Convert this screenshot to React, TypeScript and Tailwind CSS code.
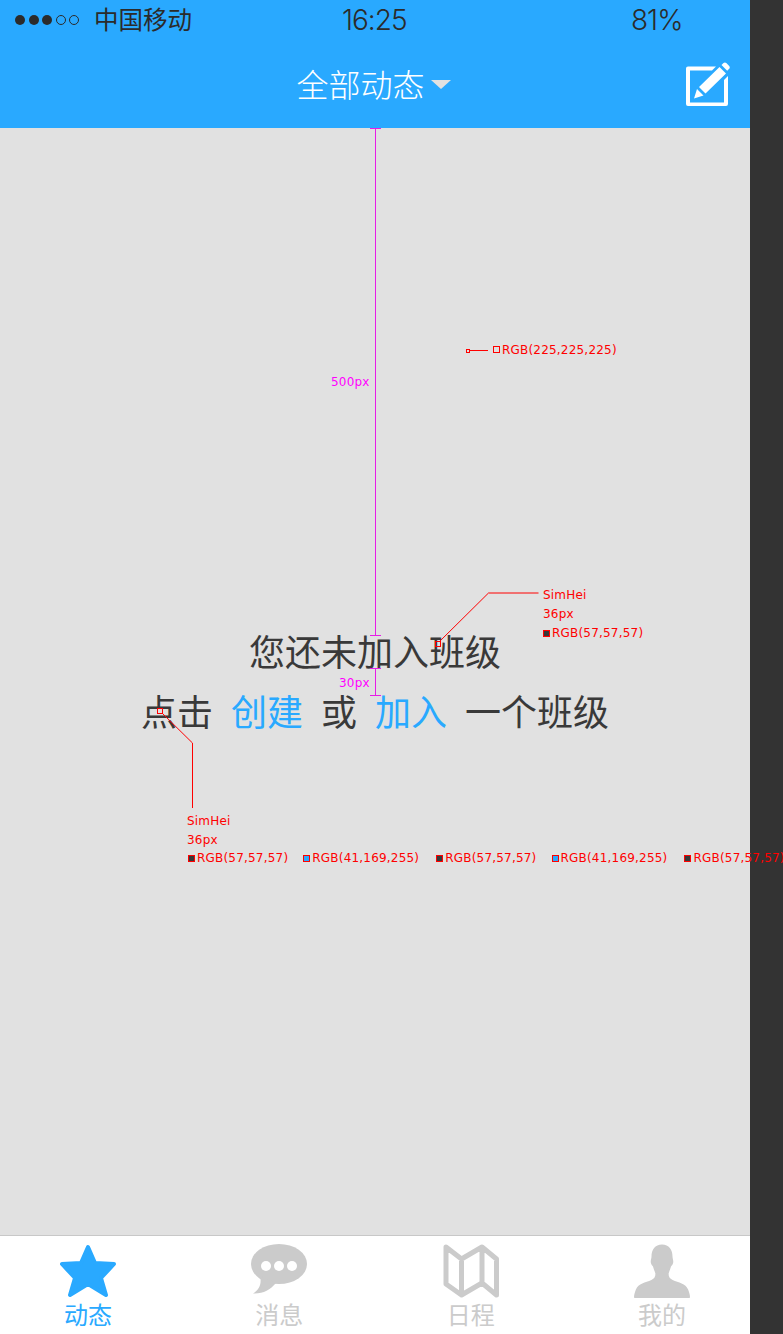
import React from 'react';

const cjk = "font-['Noto_Sans_CJK_SC','Noto_Sans',sans-serif]";

const Swatch = ({ fill }: { fill: string }) => (
  <svg width="7" height="7" className="shrink-0">
    <rect x="0.5" y="0.5" width="6" height="6" fill={fill} stroke="#ff0000" />
  </svg>
);

const ColorTag = ({ fill, label }: { fill: string; label: string }) => (
  <div className="flex items-center gap-[2px] shrink-0">
    <Swatch fill={fill} />
    <span>{label}</span>
  </div>
);

const StarIcon = () => (
  <svg width="56" height="54" viewBox="0 0 56 54">
    <polygon
      points="28,3 35,19 54,20 41,34 46,51 28,40 10,51 15,34 2,20 21,19"
      fill="#29a9ff"
      stroke="#29a9ff"
      strokeWidth="4"
      strokeLinejoin="round"
    />
  </svg>
);

const BubbleIcon = () => (
  <svg width="56" height="54" viewBox="0 0 56 54">
    <ellipse cx="28" cy="20" rx="28" ry="20" fill="#cbcbcb" />
    <path d="M9 32C11 40 8 46 2 49.500 12 50 19 46 25 39Z" fill="#cbcbcb" />
    <circle cx="15" cy="22" r="5" fill="#fff" />
    <circle cx="28" cy="22" r="5" fill="#fff" />
    <circle cx="41" cy="22" r="5" fill="#fff" />
  </svg>
);

const MapIcon = () => (
  <svg width="56" height="54" viewBox="0 0 56 54">
    <path
      d="M3 3L18.500 15 39 3 53.500 15V51L39 39 18.500 51 3 40ZM18.500 15V51M39 3V39"
      fill="none"
      stroke="#cbcbcb"
      strokeWidth="5"
      strokeLinejoin="round"
    />
  </svg>
);

const PersonIcon = () => (
  <svg width="56" height="54" viewBox="0 0 56 54">
    <path
      d="M28 0.500c7 0 10.500 5 10.500 12 0 2 1 3.500 0.700 6-0.200 2-1.600 3-2.200 4-0.800 3-1.800 5-2.400 7 0 3.500 1 5 4 6.500 6 2.500 13 3.500 15.500 9.500 1 2.500 1.900 5.500 1.900 7.500 0 0.600-0.400 1-1 1h-54c-0.600 0-1-0.400-1-1 0-2 0.900-5 1.900-7.500 2.500-6 9.500-7 15.500-9.500 3-1.500 4-3 4-6.500-0.600-2-1.600-4-2.400-7-0.600-1-2-2-2.200-4-0.300-2.500 0.700-4 0.700-6 0-7 3.500-12 10.500-12z"
      fill="#cbcbcb"
    />
  </svg>
);

const tabs = [
  { label: '动态', icon: <StarIcon />, color: 'text-[#29a9ff]' },
  { label: '消息', icon: <BubbleIcon />, color: 'text-[#cbcbcb]' },
  { label: '日程', icon: <MapIcon />, color: 'text-[#cbcbcb]' },
  { label: '我的', icon: <PersonIcon />, color: 'text-[#cbcbcb]' },
];

export default function App() {
  return (
    <div className={`relative flex w-[783px] h-[1334px] overflow-hidden bg-[#333333] ${cjk}`}>
      <div className="flex flex-col w-[750px] h-full shrink-0 bg-[#e1e1e1]">
        {/* status bar + title */}
        <div className="bg-[#29a9ff] h-[128px] shrink-0">
          <div className="flex items-center h-[40px] text-[#2b2b2b]">
            <div className="flex items-center w-[342px] pl-[15px]">
              <div className="flex gap-[3.5px] w-[79px]">
                <span className="w-[10px] h-[10px] rounded-full bg-[#2b2b2b]" />
                <span className="w-[10px] h-[10px] rounded-full bg-[#2b2b2b]" />
                <span className="w-[10px] h-[10px] rounded-full bg-[#2b2b2b]" />
                <span className="w-[10px] h-[10px] rounded-full border border-[#2b2b2b]" />
                <span className="w-[10px] h-[10px] rounded-full border border-[#2b2b2b]" />
              </div>
              <span className="text-[24.500px] leading-none -mt-[2px]">中国移动</span>
            </div>
            <span className="w-[289px] font-['Inter'] font-light text-[28px] tracking-[-1px] leading-none">16:25</span>
            <span className="font-['Inter'] font-light text-[28px] tracking-[-1px] leading-none">81%</span>
          </div>
          <div className="grid grid-cols-[1fr_auto_1fr] items-center h-[88px]">
            <div />
            <div className="flex items-center gap-[6px] pr-[3px] text-white">
              <span className="text-[32px] leading-none font-light -mt-[3px]">全部动态</span>
              <svg width="20" height="9" viewBox="0 0 20 9">
                <path d="M0 0h20l-10 9z" fill="#e1e1e1" />
              </svg>
            </div>
            <div className="flex justify-end pr-[20px]">
              <svg width="46" height="46" viewBox="0 0 46 46">
                <path d="M2 5.500h30L28 9.500H6v32h34V19l4-4v28a2 2 0 0 1-2 2H4a2 2 0 0 1-2-2V7.500a2 2 0 0 1 2-2z" fill="#fff" />
                <path d="M10 37.500l3-9.500 6.500 6.500zM15 26L35.500 6l6.500 6.500L21.500 32.500zM37.500 4l2-2c0.800-0.800 2-0.800 2.800 0l2.900 2.900c0.800 0.800 0.800 2 0 2.800l-2 2z" fill="#fff" />
              </svg>
            </div>
          </div>
        </div>

        {/* empty state */}
        <div className="flex flex-col items-center flex-1 pt-[492px] text-[36px] leading-[60px] text-[#393939]">
          <div>您还未加入班级</div>
          <div className="flex gap-[18px]">
            <span>点击</span>
            <span className="text-[#29a9ff]">创建</span>
            <span>或</span>
            <span className="text-[#29a9ff]">加入</span>
            <span>一个班级</span>
          </div>
        </div>

        {/* tab bar */}
        <div className="flex justify-between h-[99px] shrink-0 px-[60px] pt-[8px] bg-white border-t border-[#c8c8c8]">
          {tabs.map((t) => (
            <div key={t.label} className="flex flex-col items-center w-[56px]">
              {t.icon}
              <span className={`mt-[1px] text-[24px] leading-[30px] whitespace-nowrap ${t.color}`}>{t.label}</span>
            </div>
          ))}
        </div>
      </div>

      {/* measure annotations */}
      <div className="absolute left-0 top-0 w-[783px] h-[1334px] overflow-hidden pointer-events-none font-['DejaVu_Sans'] text-[12px] tracking-[0.2px] leading-none">
        <svg width="783" height="1334" className="absolute left-0 top-0">
          <g stroke="#e61ee6" fill="none">
            <path d="M375.500 128v507M370 128.500h11M370 635.500h11M375.500 668v27M370 668.500h11M370 695.500h11" />
          </g>
          <g stroke="#ff0000" fill="none">
            <path d="M470 350.500h18" />
            <rect x="466.500" y="349.500" width="3" height="3" />
            <rect x="493.500" y="346.500" width="6" height="6" />
            <path d="M439 642l49.500-49h50" />
            <rect x="435.500" y="641.500" width="5" height="5" />
            <path d="M162 713l30.500 30v65" />
            <rect x="157.500" y="708.500" width="5" height="5" />
          </g>
        </svg>

        <div className="absolute left-[331px] top-[376px] text-[#ff00ff]">500px</div>
        <div className="absolute left-[339px] top-[677px] text-[#ff00ff]">30px</div>
        <div className="absolute left-[502px] top-[344px] text-[#ff0000]">RGB(225,225,225)</div>

        <div className="absolute left-[543px] top-[589px] flex flex-col gap-[7px] text-[#ff0000]">
          <span>SimHei</span>
          <span>36px</span>
          <ColorTag fill="#393939" label="RGB(57,57,57)" />
        </div>

        <div className="absolute left-[187px] top-[815px] flex flex-col gap-[6px] text-[#ff0000]">
          <span>SimHei</span>
          <span className="mt-[1px]">36px</span>
          <div className="flex gap-[15px] pl-[1px] whitespace-nowrap">
            <ColorTag fill="#393939" label="RGB(57,57,57)" />
            <div className="mr-[2px]"><ColorTag fill="#29a9ff" label="RGB(41,169,255)" /></div>
            <ColorTag fill="#393939" label="RGB(57,57,57)" />
            <div className="mr-[2px]"><ColorTag fill="#29a9ff" label="RGB(41,169,255)" /></div>
            <ColorTag fill="#393939" label="RGB(57,57,57)" />
          </div>
        </div>
      </div>
    </div>
  );
}
